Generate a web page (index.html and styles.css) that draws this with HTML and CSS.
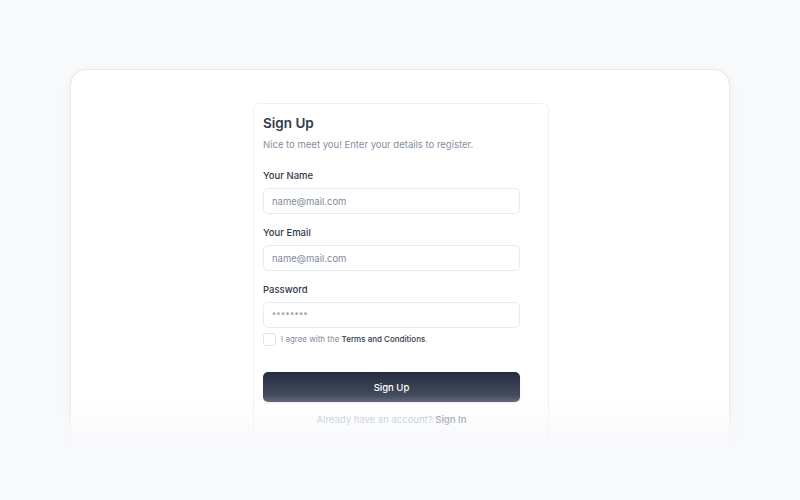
FILE: index.html
```html
<!DOCTYPE html>
<html lang="en">
<head>
<meta charset="utf-8">
<title>Sign Up</title>
<link rel="stylesheet" href="styles.css">
</head>
<body>
<div class="stage">
  <div class="frame">
    <div class="card">
      <h1 class="title">Sign Up</h1>
      <p class="subtitle">Nice to meet you! Enter your details to register.</p>
      <form class="form">
        <label class="label">Your Name</label>
        <div class="input"><span class="placeholder">name@mail.com</span></div>
        <label class="label">Your Email</label>
        <div class="input"><span class="placeholder">name@mail.com</span></div>
        <label class="label">Password</label>
        <div class="input"><span class="placeholder dots">********</span></div>
        <div class="agree">
          <span class="checkbox"></span>
          <span class="agree-text">I agree with the <span class="terms">Terms and Conditions</span>.</span>
        </div>
        <div class="button">Sign Up</div>
        <p class="footer">Already have an account? <span class="signin">Sign In</span></p>
      </form>
    </div>
  </div>
</div>
<div class="fade"></div>
</body>
</html>
```
FILE: styles.css
```css
* { box-sizing: border-box; }
html, body { margin: 0; padding: 0; }
body {
  width: 800px;
  height: 500px;
  overflow: hidden;
  background: #f8f9fb;
  font-family: Inter, "Noto Sans", sans-serif;
  position: relative;
}
.stage {
  padding: 69px 70px 0 70px;
}
.frame {
  height: 420px;
  background: #ffffff;
  border: 1px solid #e7e9ed;
  border-radius: 16px;
  box-shadow: 0 2px 10px rgba(30, 40, 60, 0.05);
  padding: 33px 0 0 182px;
}
.card {
  width: 296px;
  height: 400px;
  border: 1px solid #eef0f3;
  border-radius: 6px;
  padding: 9px 28px 0 9px;
}
.title {
  margin: 0;
  font-size: 13.5px;
  font-weight: 600;
  color: #333a48;
  line-height: 20px;
}
.subtitle {
  margin: 5px 0 0 0;
  font-size: 9.5px;
  line-height: 14px;
  color: #8290a3;
}
.form {
  margin-top: 17px;
  display: flex;
  flex-direction: column;
}
.label {
  font-size: 9.5px;
  font-weight: 500;
  color: #333a48;
  line-height: 14px;
  margin-bottom: 5px;
}
.input {
  height: 26px;
  border: 1px solid #e8ebef;
  border-radius: 5px;
  display: flex;
  align-items: center;
  padding-left: 8px;
  margin-bottom: 12px;
}
.placeholder {
  font-size: 9.5px;
  color: #7f8a9c;
}
.dots {
  font-size: 8px;
  letter-spacing: 0.5px;
}
.agree {
  display: flex;
  align-items: center;
  margin-top: -8px;
  gap: 5px;
  height: 14px;
}
.checkbox {
  width: 13px;
  height: 13px;
  border: 1px solid #dfe3e8;
  border-radius: 3px;
}
.agree-text {
  font-size: 8px;
  color: #7f8a9c;
}
.terms {
  color: #333a48;
  font-weight: 500;
}
.button {
  margin-top: 26px;
  height: 30px;
  border-radius: 5px;
  background: linear-gradient(to bottom, #262d3e, #4b5366);
  color: #ffffff;
  font-size: 9.5px;
  font-weight: 500;
  display: flex;
  align-items: center;
  justify-content: center;
  box-shadow: 0 1px 2px rgba(0, 0, 0, 0.1);
}
.footer {
  margin: 12px 0 0 0;
  text-align: center;
  font-size: 9.5px;
  color: #a4adbb;
}
.signin {
  color: #6b7280;
  font-weight: 600;
}
.fade {
  position: absolute;
  left: 0;
  right: 0;
  top: 395px;
  bottom: 0;
  background: linear-gradient(to bottom, rgba(248, 249, 251, 0) 0px, rgba(248, 249, 251, 0.6) 30px, #f8f9fb 55px);
}
```
